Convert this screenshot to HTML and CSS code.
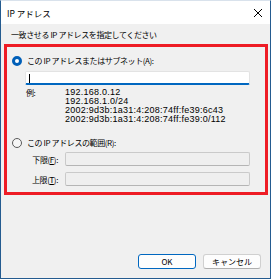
FILE: index.html
```html
<!doctype html>
<html>
<head>
	<meta charset="utf-8">
	<title>IP アドレス</title>
	<link rel="stylesheet" href="styles.css">
</head>

<body>
	<div class="window">
		<div class="titlebar">
			<span class="title">IP アドレス</span>
			<svg class="close" width="10" height="10" viewBox="0 0 10 10">
				<path d="M1 1 L9 9 M9 1 L1 9" stroke="#000" stroke-width="1" fill="none"/>
			</svg>
		</div>
		<div class="client">
			<div class="prompt">一致させる IP アドレスを指定してください</div>
			<div class="group">
				<div class="option">
					<span class="radio checked"></span>
					<span>この IP アドレスまたはサブネット(A):</span>
				</div>
				<div class="field active"><span class="caret"></span></div>
				<div class="examples">
					<span class="ex-label">例:</span>
					<div class="ex-list">
						<div>192.168.0.12</div>
						<div>192.168.1.0/24</div>
						<div>2002:9d3b:1a31:4:208:74ff:fe39:6c43</div>
						<div>2002:9d3b:1a31:4:208:74ff:fe39:0/112</div>
					</div>
				</div>
				<div class="option second">
					<span class="radio"></span>
					<span>この IP アドレスの範囲(R):</span>
				</div>
				<div class="range">
					<span class="range-label">下限(<u>F</u>):</span>
					<div class="field disabled"></div>
					<span class="range-label">上限(<u>T</u>):</span>
					<div class="field disabled"></div>
				</div>
			</div>
			<div class="buttons">
				<button class="btn default">OK</button>
				<button class="btn">キャンセル</button>
			</div>
		</div>
	</div>
</body>
</html>
```

FILE: styles.css
```css
body {
	margin: 0;
	background: #fff;
	font-family: "Noto Sans CJK JP", "Liberation Sans", sans-serif;
	font-size: 8px;
	letter-spacing: -0.4px;
	color: #000;
}
.window {
	display: flex;
	flex-direction: column;
	box-sizing: border-box;
	width: 271px;
	height: 279px;
	border: 1px solid #245b90;
	border-top-color: #d9e2ec;
}
.titlebar {
	display: flex;
	align-items: center;
	justify-content: space-between;
	height: 23px;
	padding: 0 7px 0 6px;
	background: #fff;
}
.title {
	font-size: 8.5px;
	letter-spacing: 0;
}
.client {
	flex: 1;
	display: flex;
	flex-direction: column;
	background: #f0f0f0;
	padding: 5px 9px 9px 3px;
}
.prompt {
	margin-left: 7px;
	line-height: 12px;
}
.group {
	margin-top: 3px;
	width: 253px;
	height: 145px;
	border: 3px solid #ee1c25;
	padding: 0 0 0 5px;
}
.option {
	display: flex;
	align-items: center;
	gap: 5px;
	margin-top: 8px;
	height: 11px;
	line-height: 11px;
}
.option.second {
	margin-top: 13px;
}
.radio {
	box-sizing: border-box;
	width: 10px;
	height: 10px;
	border-radius: 50%;
	border: 1px solid #5a5a5a;
	background: #f6f6f6;
	flex: none;
}
.radio.checked {
	border: 3px solid #005fb8;
	background: #fff;
}
.field {
	box-sizing: border-box;
	height: 14px;
	border: 1px solid #d0d0d0;
	border-radius: 2px;
}
.field.active {
	margin: 5px 0 0 13px;
	width: 225px;
	background: #fff;
	border-color: #e3e3e3;
	border-bottom: 2px solid #0067c0;
	padding: 2px 3px;
}
.caret {
	display: block;
	width: 1px;
	height: 9px;
	background: #000;
}
.field.disabled {
	background: #efefef;
	border-color: #cacaca;
	border-bottom-color: #b5b5b5;
}
.examples {
	display: flex;
	align-items: flex-start;
	margin: 3px 0 0 14px;
}
.ex-label {
	width: 39px;
	line-height: 9px;
}
.ex-list {
	font-family: "Liberation Sans", sans-serif;
	font-size: 9px;
	line-height: 9px;
	letter-spacing: 0.25px;
}
.range {
	display: grid;
	grid-template-columns: 46px 185px;
	column-gap: 7px;
	row-gap: 6px;
	margin-top: 4px;
	align-items: center;
}
.range-label {
	text-align: right;
}
.buttons {
	margin-top: auto;
	display: flex;
	justify-content: flex-end;
	gap: 7px;
}
.btn {
	box-sizing: border-box;
	width: 58px;
	height: 15px;
	padding: 0;
	font-family: "Noto Sans CJK JP", "Liberation Sans", sans-serif;
	font-size: 8px;
	background: #fdfdfd;
	border: 1px solid #d0d0d0;
	border-bottom-color: #b0b0b0;
	border-radius: 3px;
	color: #000;
}
.btn.default {
	border: 1px solid #0067c0;
}
```
